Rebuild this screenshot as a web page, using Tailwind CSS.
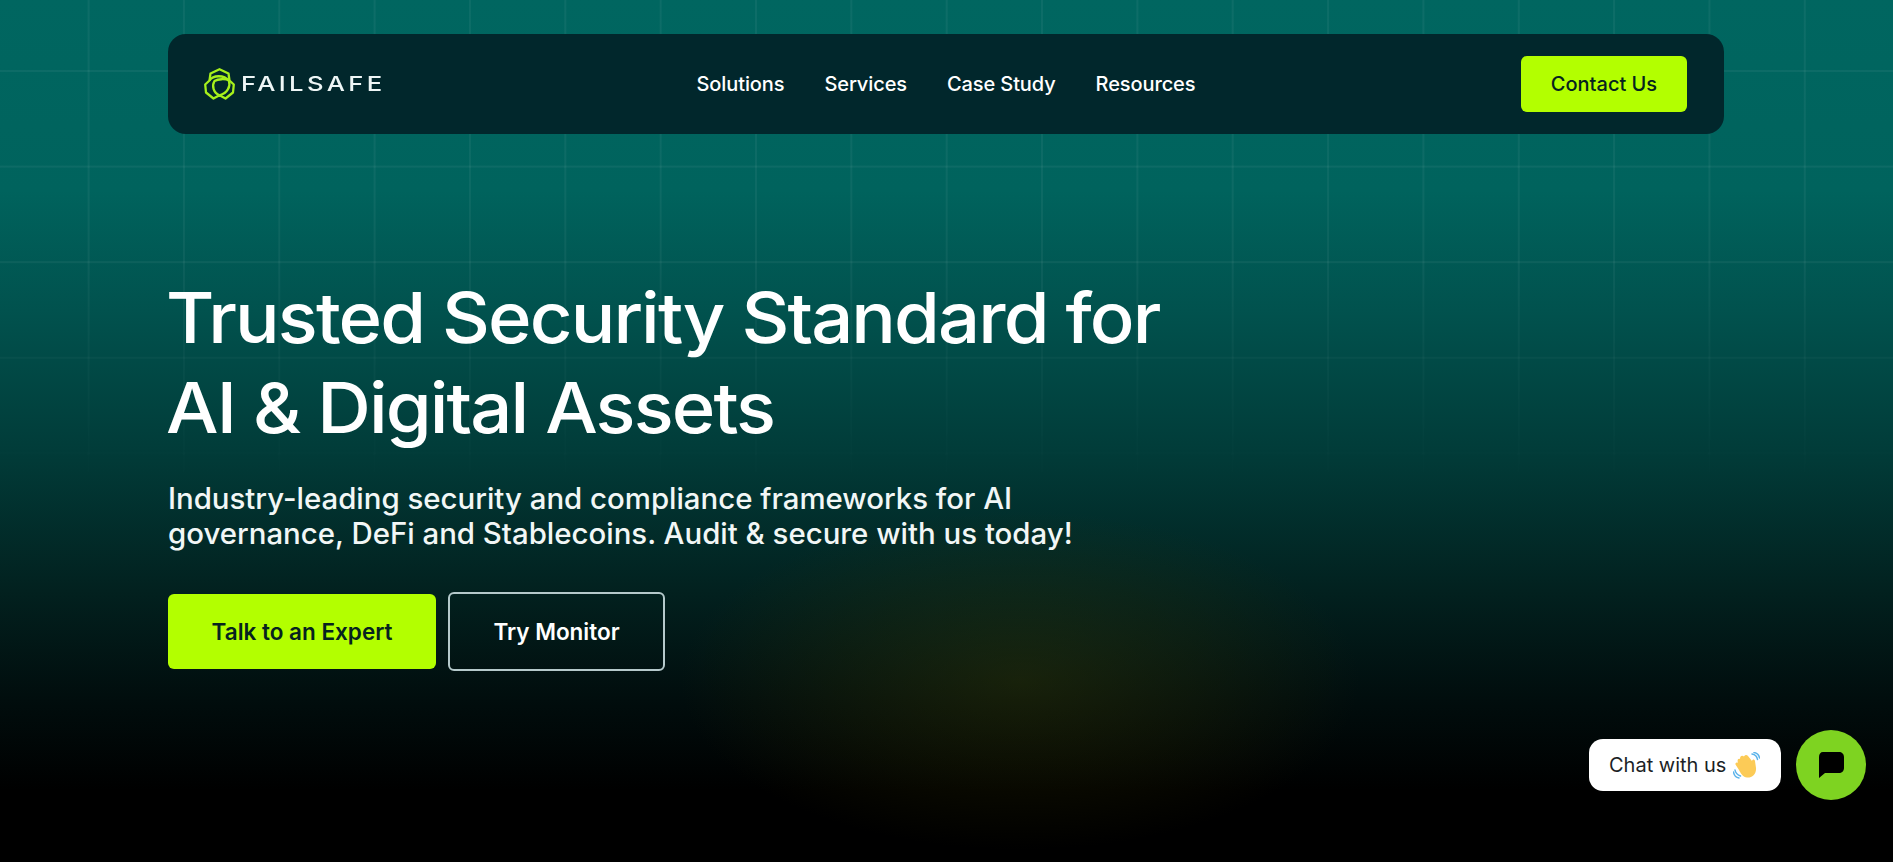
<!DOCTYPE html>
<html lang="en">
<head>
    <meta charset="UTF-8">
    <meta name="viewport" content="width=device-width, initial-scale=1.0">
    <title>Failsafe</title>
    <script src="https://cdn.jsdelivr.net/npm/@tailwindcss/browser@4"></script>
</head>
<body class="bg-black font-['Inter',sans-serif] text-white">

    <div class="relative h-[862px] overflow-hidden bg-[linear-gradient(180deg,#006660_0px,#00635d_190px,#01524e_310px,#013c39_450px,#02211f_590px,#010d0d_700px,#000_790px)]">

        <!-- Grid lines -->
        <div class="absolute inset-0 bg-[linear-gradient(90deg,rgba(255,255,255,0.05)_1.5px,transparent_1.5px),linear-gradient(180deg,rgba(255,255,255,0.05)_1.5px,transparent_1.5px)] bg-size-[95.35px_95.6px] bg-position-[87.6px_70px] mask-[linear-gradient(180deg,#000_0px,#000_260px,transparent_500px)]"></div>

        <!-- Glow -->
        <div class="absolute left-[680px] top-[510px] w-[680px] h-[340px] bg-[radial-gradient(closest-side,rgba(72,70,0,0.32),rgba(60,60,0,0.18)_55%,transparent)]"></div>

        <div class="relative pl-[168px] pr-[169px] pt-[34px]">

            <!-- Navbar -->
            <nav class="flex items-center justify-between h-[100px] pl-[36px] pr-[37px] rounded-[18px] bg-[#01272c]">
                <a href="#" class="flex items-center gap-[6px] w-[178px]">
                    <svg class="w-[31px] h-[32px] shrink-0" viewBox="0 0 31 32" fill="none" stroke="#a6f01b" stroke-width="2.300" stroke-linejoin="round">
                        <path d="M15.500 1.200 L24.500 5.500 L25.500 12.500 L29.800 16.500 L29 24.500 L21.500 30.500 L15.500 27.300 L9.500 30.500 L2 24.500 L1.200 16.500 L5.500 12.500 L6.500 5.500 Z"/>
                        <path d="M5.500 12.500 C9 7 20 6.500 25 13 C26.500 18 24 25 15.500 27.300"/>
                        <path d="M25.500 12.500 C21 10.500 14 11 10.500 13 C7.500 18 9.500 25 15.500 27.300"/>
                    </svg>
                    <span class="origin-left scale-x-125 text-[20.500px] font-medium leading-none tracking-[2.700px] text-[#eef6f6]">FAILSAFE</span>
                </a>
                <div class="flex items-center gap-[40px] text-[20px] font-medium tracking-[-0.005em] mr-[11px]">
                    <a href="#">Solutions</a>
                    <a href="#">Services</a>
                    <a href="#">Case Study</a>
                    <a href="#">Resources</a>
                </div>
                <a href="#" class="flex items-center justify-center w-[166px] h-[56px] rounded-[6px] bg-[#b3ff00] text-[20px] font-medium text-[#06231f]">Contact Us</a>
            </nav>

            <!-- Hero -->
            <h1 class="mt-[139px] -ml-[2px] origin-left scale-x-[1.06] text-[70px] font-medium leading-[90px] tracking-[-1.800px]">Trusted Security Standard for<br>AI &amp; Digital Assets</h1>
            <p class="mt-[28px] text-[29.400px] font-medium leading-[35px] text-[#f2f7f6]">Industry-leading security and compliance frameworks for AI<br>governance, DeFi and Stablecoins. Audit &amp; secure with us today!</p>

            <div class="mt-[41px] flex items-center gap-[12px]">
                <a href="#" class="flex items-center justify-center w-[268px] h-[75px] rounded-[6px] bg-[#b3ff00] text-[22.500px] font-semibold text-[#06231f]">Talk to an Expert</a>
                <a href="#" class="flex items-center justify-center w-[217px] h-[79px] rounded-[6px] border-2 border-[#b5c9cb] text-[22.500px] font-semibold">Try Monitor</a>
            </div>
        </div>

        <!-- Chat widget -->
        <div class="absolute right-[27px] bottom-[62px] flex items-center gap-[15px]">
            <div class="flex items-center gap-[7px] w-[192px] h-[52px] pl-[20px] rounded-[14px] bg-white text-[20px] text-[#1c1f26]">
                <span>Chat with us</span>
                <svg class="w-[27px] h-[27px]" viewBox="0 0 27 27" fill="none">
                    <path d="M5 11 C4 8 5 6 7 7 C7 4 9 3 11 4.500 C12 2.500 14 2.500 15 4 L19 9 C19.500 7 21.500 7 22 9 L23 16 C23.500 22 19 26 14 25.500 C10 25 8 22 6 18 L2.500 12.500 C2 11 4 10 5 11 Z" fill="#fccb57"/>
                    <path d="M19 2 C22 2.500 24 4.500 24.500 7.500 M21 0.500 C24 1 26 3 26.500 6 M2 18 C2.500 21 4.500 23 7.500 24 M0.500 20 C1 23 3 25.500 6 26" stroke="#5bb3ea" stroke-width="1.500" stroke-linecap="round"/>
                </svg>
            </div>
            <div class="flex items-center justify-center w-[70px] h-[70px] rounded-full bg-[#7ed321]">
                <svg class="w-[26px] h-[26px]" viewBox="0 0 26 26" fill="#000">
                    <path d="M5 0 H21 C23.800 0 26 2 26 5 V16 C26 19 23.800 21 21 21 H7 L1 26 V5 C1 2 2.500 0 5 0 Z"/>
                </svg>
            </div>
        </div>
    </div>

</body>
</html>
